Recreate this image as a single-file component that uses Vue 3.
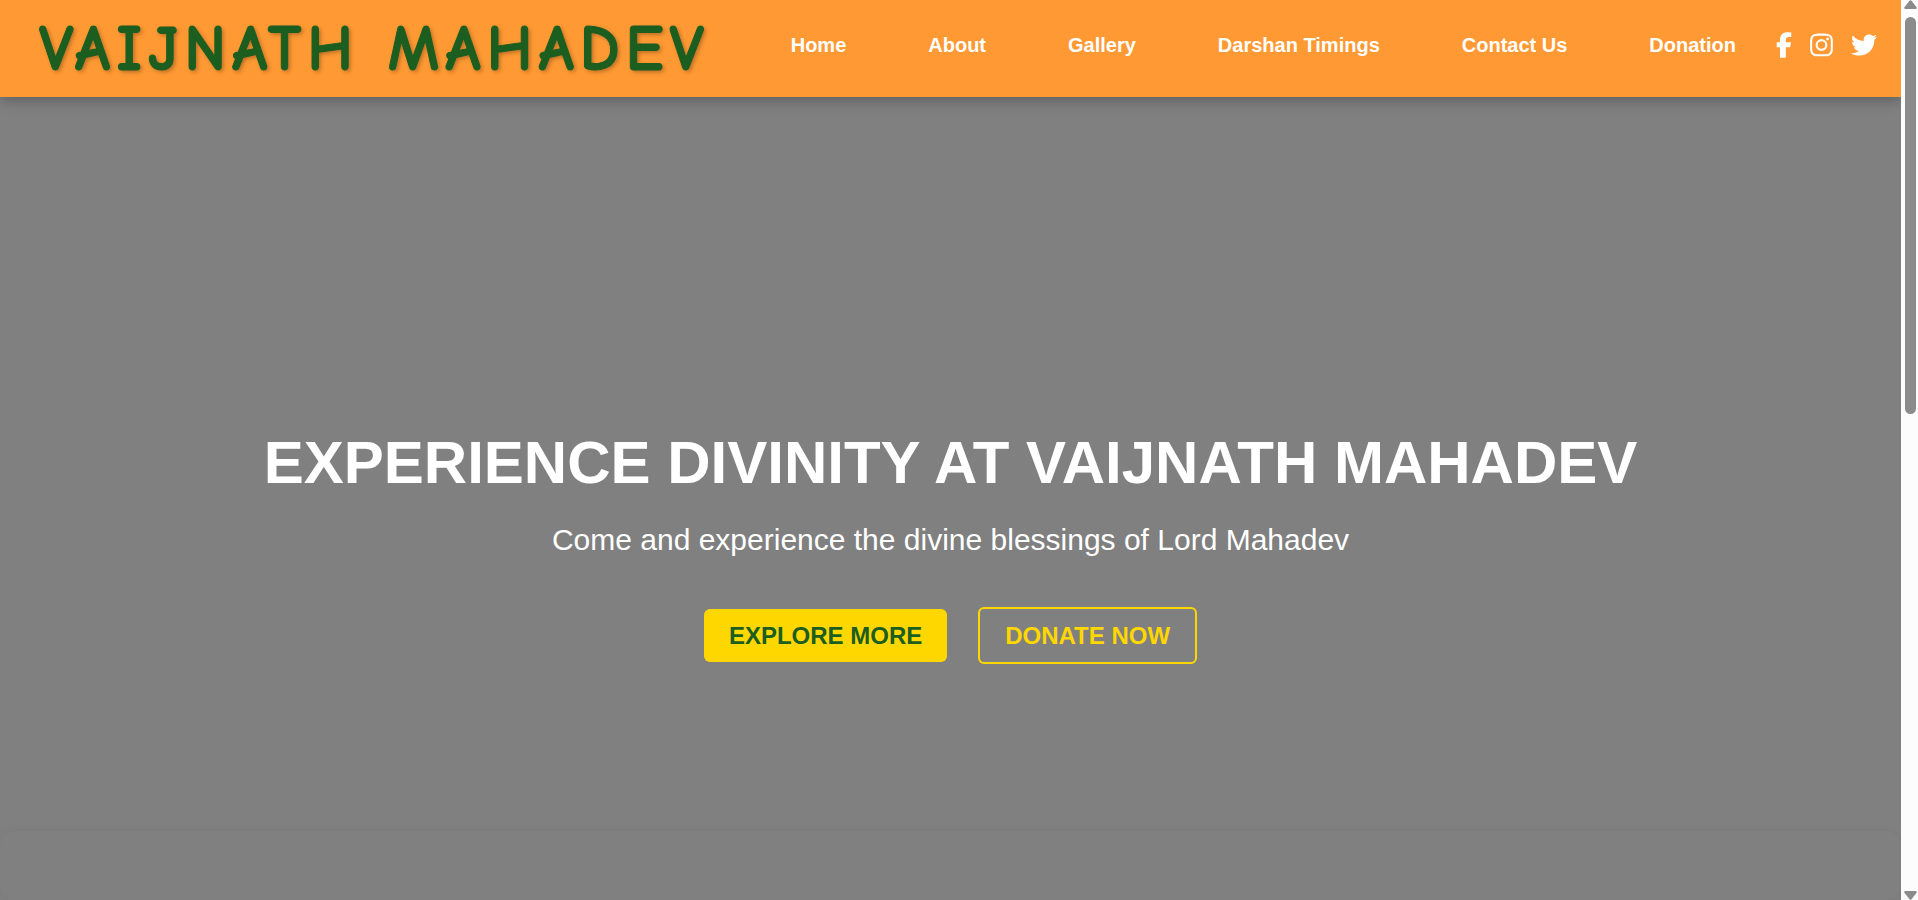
<script setup>
const links = ['Home', 'About', 'Gallery', 'Darshan Timings', 'Contact Us', 'Donation']

const socials = [
  {
    name: 'Facebook',
    box: '0 0 320 512',
    width: 16,
    path: 'M80 299.3V512H196V299.3h86.5l18-97.8H196V166.9c0-51.7 20.3-71.5 72.7-71.5c16.3 0 29.4 .4 37 1.2V7.9C291.4 4 256.4 0 236.2 0C129.3 0 80 50.5 80 159.4v42.1H14v97.8H80z'
  },
  {
    name: 'Instagram',
    box: '0 0 448 512',
    width: 23,
    path: 'M224.1 141c-63.6 0-114.9 51.3-114.9 114.9s51.3 114.9 114.9 114.9S339 319.5 339 255.900 287.700 141 224.100 141zm0 189.600c-41.100 0-74.700-33.500-74.700-74.700s33.500-74.700 74.700-74.700 74.700 33.500 74.700 74.700-33.600 74.700-74.700 74.700zm146.400-194.300c0 14.900-12 26.800-26.800 26.800-14.900 0-26.800-12-26.800-26.800s12-26.800 26.800-26.800 26.800 12 26.800 26.800zm76.100 27.200c-1.700-35.900-9.900-67.700-36.200-93.900-26.200-26.200-58-34.400-93.900-36.200-37-2.100-147.900-2.100-184.900 0-35.800 1.700-67.600 9.900-93.900 36.100s-34.400 58-36.200 93.900c-2.100 37-2.100 147.900 0 184.900 1.700 35.900 9.900 67.700 36.200 93.900s58 34.400 93.900 36.200c37 2.100 147.900 2.100 184.900 0 35.900-1.700 67.700-9.900 93.900-36.200 26.200-26.200 34.400-58 36.200-93.900 2.100-37 2.100-147.800 0-184.800zM398.800 388c-7.800 19.600-22.900 34.700-42.600 42.600-29.500 11.700-99.500 9-132.100 9s-102.700 2.600-132.100-9c-19.600-7.800-34.700-22.900-42.600-42.600-11.700-29.500-9-99.500-9-132.100s-2.600-102.700 9-132.100c7.800-19.600 22.900-34.700 42.600-42.600 29.500-11.700 99.500-9 132.100-9s102.700-2.600 132.100 9c19.600 7.800 34.700 22.900 42.600 42.600 11.700 29.500 9 99.500 9 132.100s2.700 102.700-9 132.100z'
  },
  {
    name: 'Twitter',
    box: '0 0 512 512',
    width: 26,
    path: 'M459.37 151.716c.325 4.548.325 9.097.325 13.645 0 138.72-105.583 298.558-298.558 298.558-59.452 0-114.680-17.219-161.137-47.106 8.447.974 16.568 1.299 25.340 1.299 49.055 0 94.213-16.568 130.274-44.832-46.132-.975-84.792-31.188-98.112-72.772 6.498.974 12.995 1.624 19.818 1.624 9.421 0 18.843-1.300 27.614-3.573-48.081-9.747-84.143-51.980-84.143-102.985v-1.299c13.969 7.797 30.214 12.670 47.431 13.319-28.264-18.843-46.781-51.005-46.781-87.391 0-19.492 5.197-37.360 14.294-52.954 51.655 63.675 129.300 105.258 216.365 109.807-1.624-7.797-2.599-15.918-2.599-24.040 0-57.828 46.782-104.934 104.934-104.934 30.213 0 57.502 12.670 76.670 33.137 23.715-4.548 46.456-13.320 66.599-25.340-7.798 24.366-24.366 44.833-46.132 57.827 21.117-2.273 41.584-8.122 60.426-16.243-14.292 20.791-32.161 39.308-52.628 54.253z'
  }
]
</script>

<template>
  <div class="window">
    <div class="page">
      <header class="topbar">
        <div class="brand">VAIJNATH MAHADEV</div>
        <div class="menu">
          <nav class="links">
            <a v-for="link in links" :key="link" href="#">{{ link }}</a>
          </nav>
          <div class="socials">
            <a v-for="s in socials" :key="s.name" href="#" :aria-label="s.name">
              <svg :viewBox="s.box" :width="s.width" height="26" aria-hidden="true">
                <path :d="s.path" fill="currentColor" />
              </svg>
            </a>
          </div>
        </div>
      </header>

      <main class="hero">
        <h1>EXPERIENCE DIVINITY AT VAIJNATH MAHADEV</h1>
        <p>Come and experience the divine blessings of Lord Mahadev</p>
        <div class="actions">
          <button type="button" class="btn filled">EXPLORE MORE</button>
          <button type="button" class="btn outlined">DONATE NOW</button>
        </div>
      </main>

      <section class="next"></section>
    </div>

    <div class="scrollbar" aria-hidden="true">
      <svg viewBox="0 0 13 9" width="13" height="9"><path d="M5.500 .8Q6.500 -.4 7.500 .8L12.600 7.200Q13 9 11.500 9H1.500Q0 9 .4 7.200Z" fill="#8b8b8b" /></svg>
      <div class="track"><div class="thumb"></div></div>
      <svg viewBox="0 0 13 9" width="13" height="9"><path d="M5.500 8.200Q6.500 9.400 7.500 8.200L12.600 1.800Q13 0 11.500 0H1.500Q0 0 .4 1.800Z" fill="#8b8b8b" /></svg>
    </div>
  </div>
</template>

<style>
body {
  margin: 0;
}
</style>

<style scoped>
.window {
  display: flex;
  height: 100vh;
  overflow: hidden;
  font-family: Arial, "Liberation Sans", sans-serif;
}

.page {
  flex: 1;
  min-width: 0;
  display: flex;
  flex-direction: column;
  overflow: hidden;
  background: #808080;
}

.topbar {
  position: relative;
  display: flex;
  align-items: center;
  justify-content: space-between;
  box-sizing: border-box;
  min-height: 97px;
  padding: 0 24px 0 39px;
  background: #ff9933;
  box-shadow: 0 4px 12px rgba(0, 0, 0, 0.25);
}

.brand {
  color: #1b5e20;
  font-family: "Comic Sans MS", "Comic Neue", Lato, sans-serif;
  font-size: 64px;
  font-weight: 900;
  line-height: 84px;
  letter-spacing: 6px;
  white-space: nowrap;
  -webkit-text-stroke: 1px #1b5e20;
  text-shadow: 2px 2px 4px rgba(0, 0, 0, 0.3);
}

.menu {
  display: flex;
  align-items: center;
  gap: 40px;
  padding-bottom: 8px;
}

.links {
  display: flex;
  gap: 82px;
}

.links a {
  color: #fff;
  font-size: 20px;
  font-weight: 700;
  line-height: 24px;
  white-space: nowrap;
  text-decoration: none;
}

.socials {
  display: flex;
  gap: 18px;
}

.socials a {
  display: flex;
  color: #fff;
}

.hero {
  flex: 1;
  display: flex;
  flex-direction: column;
  align-items: center;
  justify-content: flex-end;
  padding-bottom: 167px;
  text-align: center;
  color: #fff;
}

h1 {
  margin: 0 0 24px;
  font-size: 60px;
  font-weight: 700;
  line-height: 70px;
}

p {
  margin: 0 0 49px;
  font-size: 30px;
  line-height: 36px;
}

.actions {
  display: flex;
  align-items: center;
  gap: 31px;
}

.btn {
  padding: 13px 25px;
  border: 0;
  border-radius: 6px;
  font-family: inherit;
  font-size: 24px;
  font-weight: 700;
  line-height: 27px;
}

.filled {
  background: #ffd700;
  color: #1b5e20;
}

.outlined {
  border: 2px solid #ffd700;
  background: transparent;
  color: #ffd700;
}

.next {
  height: 69px;
  border-radius: 15px;
  background: #808080;
  box-shadow: 0 0 8px rgba(0, 0, 0, 0.05);
}

.scrollbar {
  display: flex;
  flex-direction: column;
  align-items: center;
  box-sizing: border-box;
  width: 17px;
  padding-left: 2px;
  background: #fcfcfc;
}

.track {
  flex: 1;
  display: grid;
  grid-template-rows: 5fr 6fr;
  width: 11px;
  padding-top: 8px;
}

.thumb {
  border-radius: 6px;
  background: #8b8b8b;
}
</style>
